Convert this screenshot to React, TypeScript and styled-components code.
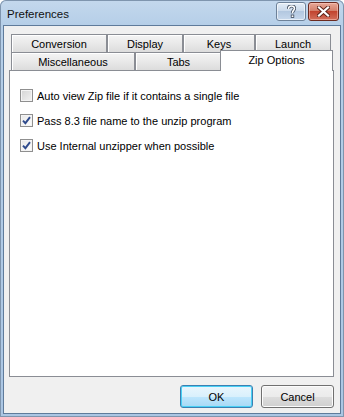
import styled, { createGlobalStyle } from "styled-components";

const GlobalStyle = createGlobalStyle`
  html, body {
    margin: 0;
    padding: 0;
    background: #ffffff;
  }
  body {
    font-family: "Liberation Sans", Arial, sans-serif;
    font-size: 11px;
    color: #000;
  }
`;

const backRow = [
  { label: "Conversion", width: 96 },
  { label: "Display", width: 76 },
  { label: "Keys", width: 72 },
  { label: "Launch", width: 76 },
];

const frontRow = [
  { label: "Miscellaneous", width: 124 },
  { label: "Tabs", width: 87 },
  { label: "Zip Options", width: 109, selected: true },
];

const options = [
  { label: "Auto view Zip file if it contains a single file", checked: false },
  { label: "Pass 8.3 file name to the unzip program", checked: true },
  { label: "Use Internal unzipper when possible", checked: true },
];

export default function App() {
  return (
    <>
      <GlobalStyle />
      <Window>
        <TitleBar>
          <Title>Preferences</Title>
          <Caption>
            <HelpButton>
              <svg width="9" height="13" viewBox="0 0 9 13">
                <path
                  d="M1.5 4 C1.5 1.8 3 1 4.5 1 C6.3 1 7.5 2 7.5 3.6 C7.5 5.2 5.5 5.6 5.5 7.6 L5.5 8.2"
                  fill="none"
                  stroke="#3d4a5c"
                  strokeWidth="3.2"
                />
                <path
                  d="M1.5 4 C1.5 1.8 3 1 4.5 1 C6.3 1 7.5 2 7.5 3.6 C7.5 5.2 5.5 5.6 5.5 7.6 L5.5 8.2"
                  fill="none"
                  stroke="#ffffff"
                  strokeWidth="1.6"
                />
                <rect x="3.8" y="9.6" width="3.4" height="3.2" fill="#3d4a5c" />
                <rect x="4.6" y="10.4" width="1.8" height="1.6" fill="#ffffff" />
              </svg>
            </HelpButton>
            <CloseButton>
              <svg width="13" height="11" viewBox="0 0 13 11">
                <path d="M2 1.5 L11 9.5 M11 1.5 L2 9.5" stroke="#5a2117" strokeWidth="4" strokeLinecap="square" />
                <path d="M2 1.5 L11 9.5 M11 1.5 L2 9.5" stroke="#ffffff" strokeWidth="2.2" strokeLinecap="square" />
              </svg>
            </CloseButton>
          </Caption>
        </TitleBar>
        <Client>
          <TabStrip>
            <TabRow>
              {backRow.map(t => (
                <Tab key={t.label} $width={t.width}>{t.label}</Tab>
              ))}
            </TabRow>
            <TabRow>
              {frontRow.map(t => (
                <Tab key={t.label} $width={t.width} $selected={t.selected}>{t.label}</Tab>
              ))}
            </TabRow>
          </TabStrip>
          <Page>
            {options.map(o => (
              <Option key={o.label}>
                <CheckBox $checked={o.checked}>
                  {o.checked && (
                    <svg width="9" height="9" viewBox="0 0 9 9">
                      <path d="M1 4.6 L3.4 7.2 L8 1.2" fill="none" stroke="#2e4a8c" strokeWidth="1.9" />
                    </svg>
                  )}
                </CheckBox>
                <span>{o.label}</span>
              </Option>
            ))}
          </Page>
          <ButtonRow>
            <DialogButton $default>OK</DialogButton>
            <DialogButton>Cancel</DialogButton>
          </ButtonRow>
        </Client>
      </Window>
    </>
  );
}

const Window = styled.div`
  width: 344px;
  height: 417px;
  box-sizing: border-box;
  display: flex;
  flex-direction: column;
  padding: 0 3px 3px 3px;
  background: linear-gradient(#c4d8ed, #b6cfe8 24px, #abc6e3);
  border-radius: 6px 6px 0 0;
  box-shadow: inset 0 0 0 1px #7f95ae;
`;

const TitleBar = styled.div`
  height: 25px;
  display: flex;
  align-items: flex-start;
  justify-content: space-between;
  padding-left: 4px;
`;

const Title = styled.div`
  font-family: "Liberation Sans", Arial, sans-serif;
  font-size: 11.5px;
  line-height: 28px;
  color: #111;
`;

const Caption = styled.div`
  display: flex;
  gap: 2px;
  padding-top: 2px;
  padding-right: 2px;
`;

const CaptionButton = styled.div`
  height: 19px;
  box-sizing: border-box;
  display: flex;
  align-items: center;
  justify-content: center;
  border-radius: 3px;
`;

const HelpButton = styled(CaptionButton)`
  width: 30px;
  border: 1px solid #6e8299;
  background: linear-gradient(#e4edf7, #cbdaeb 45%, #b3c8e0 50%, #c7d8ec);
  box-shadow: inset 0 0 0 1px rgba(255, 255, 255, 0.6);
`;

const CloseButton = styled(CaptionButton)`
  width: 31px;
  border: 1px solid #6b2a20;
  background: linear-gradient(#e8a897, #d4806c 45%, #c2442f 50%, #d2705c);
  box-shadow: inset 0 0 0 1px rgba(255, 210, 200, 0.5);
`;

const Client = styled.div`
  flex: 1;
  display: flex;
  flex-direction: column;
  background: #f0f0f0;
  border: 1px solid #5f7b9b;
  padding: 8px 6px 0 5px;
`;

const TabStrip = styled.div`
  display: flex;
  flex-direction: column;
  padding: 0 2px;
`;

const TabRow = styled.div`
  display: flex;
`;

const Tab = styled.div<{ $width: number; $selected?: boolean }>`
  position: relative;
  box-sizing: border-box;
  width: ${p => p.$width}px;
  height: 18px;
  display: flex;
  align-items: center;
  justify-content: center;
  border: 1px solid #8a8d94;
  border-bottom: none;
  background: linear-gradient(#f4f4f4, #e9e9e9 50%, #dcdcdc);
  box-shadow: inset 1px 1px 0 #ffffff;
  font-size: 11px;

  ${p =>
    p.$selected &&
    `
    width: ${p.$width + 4}px;
    height: 21px;
    margin: -2px -2px -1px -2px;
    background: #ffffff;
    box-shadow: none;
    z-index: 1;
    padding-bottom: 2px;
  `}
`;

const Page = styled.div`
  flex: 1;
  display: flex;
  flex-direction: column;
  gap: 12px;
  background: #ffffff;
  border: 1px solid #8a8d94;
  padding: 18px 10px;
`;

const Option = styled.div`
  display: flex;
  align-items: center;
  gap: 4px;
  height: 13px;
  font-size: 11px;
`;

const CheckBox = styled.div<{ $checked?: boolean }>`
  width: 13px;
  height: 13px;
  box-sizing: border-box;
  display: flex;
  align-items: center;
  justify-content: center;
  border: 1px solid #8f8f8f;
  background: ${p =>
    p.$checked
      ? "linear-gradient(135deg, #e6e6e6, #ffffff)"
      : "linear-gradient(135deg, #d4d4d4, #f2f2f2)"};
  box-shadow: inset 0 0 0 1px #f4f4f4;
`;

const ButtonRow = styled.div`
  display: flex;
  justify-content: flex-end;
  gap: 8px;
  margin: 8px 0 5px;
`;

const DialogButton = styled.div<{ $default?: boolean }>`
  width: 73px;
  height: 23px;
  box-sizing: border-box;
  display: flex;
  align-items: center;
  justify-content: center;
  border-radius: 3px;
  font-size: 11px;
  border: 1px solid ${p => (p.$default ? "#3c7fb1" : "#707070")};
  background: ${p =>
    p.$default
      ? "linear-gradient(#eaf6fd, #d9f0fc 50%, #bee6fd 50%, #a7d9f5)"
      : "linear-gradient(#f2f2f2, #ebebeb 50%, #dddddd 50%, #cfcfcf)"};
  box-shadow: inset 0 0 0 1px ${p => (p.$default ? "#48d0f5" : "#fcfcfc")};
`;
